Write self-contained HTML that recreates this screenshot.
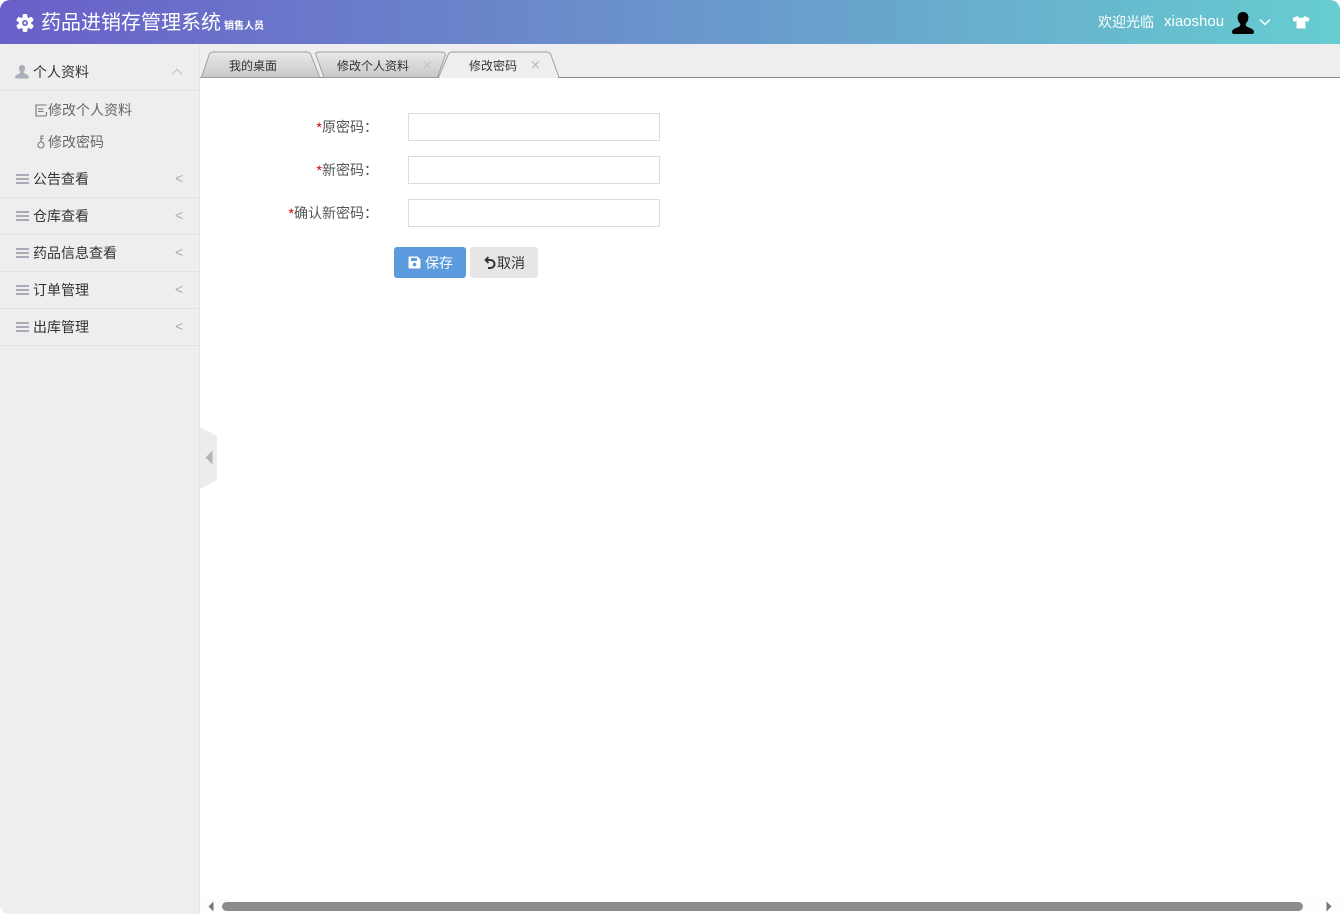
<!DOCTYPE html>
<html lang="zh-CN"><head><meta charset="utf-8"><title>药品进销存管理系统</title>
<style>
*{box-sizing:border-box;margin:0;padding:0}
html,body{width:1340px;height:914px;overflow:hidden;background:#fff}
body{font-family:"Liberation Sans","Noto Sans CJK SC",sans-serif;font-size:14px;color:#333;position:relative}
.a{position:absolute;white-space:nowrap}
#hd{left:0;top:0;width:1340px;height:44px;background:linear-gradient(90deg,#6a5fc9 0%,#6a8fcb 45%,#66cdd0 100%);border-radius:10px 10px 0 0}
#side{left:0;top:44px;width:200px;height:870px;background:#eee;border-right:1px solid #e4e4e6;border-bottom-left-radius:10px}
.ln{position:absolute;left:0;width:199px;height:1px;background:#e3e3e3}
.m{left:33px;font-size:14px;line-height:18px;color:#333}
.s{left:48px;font-size:14px;line-height:18px;color:#666}
.lt{left:175px;font-size:14px;line-height:16px;color:#aaa;font-family:"Liberation Sans",sans-serif}
.bar{left:16px;width:13px;height:10px;border-top:2px solid #aab;border-bottom:2px solid #aab}
.bar:after{content:"";position:absolute;left:0;right:0;top:2px;height:2px;background:#aab}
#tb{left:200px;top:44px;width:1140px;height:34px;background:#eeeef0;border-bottom:1px solid #8a8a8a}
.t{font-size:12px;line-height:16px;color:#333}
.x{font-size:13px;line-height:16px;color:#b5b5b5;font-family:"DejaVu Sans",sans-serif}
.lb{font-size:14px;line-height:18px;color:#555;text-align:right;width:120px;left:258px}
.lb b{color:#c00;font-weight:normal}
.in{left:408px;width:252px;height:28px;border:1px solid #ddd;background:#fff}
.btn{top:247px;height:31px;border-radius:3px;font-size:14px;line-height:31px}
</style></head><body>
<div class="a" id="hd"></div>
<svg class="a" style="left:15px;top:13px" width="20" height="20" viewBox="0 0 20 20"><g fill="#fff"><circle cx="10" cy="10" r="6.200"/><rect x="7.600" y="1" width="4.800" height="5" rx="1.500"/><rect x="7.600" y="14" width="4.800" height="5" rx="1.500"/><rect x="7.600" y="1" width="4.800" height="5" rx="1.500" transform="rotate(60 10 10)"/><rect x="7.600" y="14" width="4.800" height="5" rx="1.500" transform="rotate(60 10 10)"/><rect x="7.600" y="1" width="4.800" height="5" rx="1.500" transform="rotate(120 10 10)"/><rect x="7.600" y="14" width="4.800" height="5" rx="1.500" transform="rotate(120 10 10)"/></g><circle cx="10" cy="10" r="3" fill="#6a62c9"/><circle cx="10" cy="10" r="1.400" fill="#e8e8f8"/></svg>
<div class="a" style="left:41px;top:9px;font-size:20px;line-height:28px;color:#fff">药品进销存管理系统</div>
<div class="a" style="left:224px;top:20px;font-size:10px;line-height:14px;color:#fff;font-weight:bold">销售人员</div>
<div class="a" style="left:1098px;top:13px;font-size:14px;line-height:18px;color:#fff">欢迎光临</div>
<div class="a" style="left:1164px;top:13px;font-size:15px;line-height:18px;color:#fff">xiaoshou</div>
<svg class="a" style="left:1231px;top:11px" width="24" height="24" viewBox="0 0 24 24"><path d="M12 1c-3.800 0-5.700 2.600-5.400 6 .2 2.400 1.400 4.300 2.500 5.500.4.500.3 2-.5 2.700C7 16.600 1.500 17.500 1 20.500c-.2 1.500.8 2.500 2 2.500h18c1.200 0 2.200-1 2-2.500-.5-3-6-3.900-7.600-5.300-.8-.7-.9-2.200-.5-2.700 1.100-1.200 2.300-3.100 2.500-5.500C17.700 3.600 15.800 1 12 1z" fill="#000"/></svg>
<svg class="a" style="left:1259px;top:18px" width="12" height="8" viewBox="0 0 12 8"><path d="M1 1.500l5 5 5-5" fill="none" stroke="#fff" stroke-width="1.500"/></svg>
<svg class="a" style="left:1292px;top:15px" width="18" height="14" viewBox="0 0 18 14"><path d="M5.500 1L1 3l-.5 1 1.500 3 2.500-1v7.500h9V6l2.500 1 1.500-3-.5-1-4.500-2c-1 1.500-2 2-3.500 2S6.500 2.500 5.500 1z" fill="#fff"/></svg>

<div class="a" id="side"></div>
<svg class="a" style="left:15px;top:65px" width="14" height="14" viewBox="0 0 14 14"><path d="M7 0C5 0 3.800 1.500 4 3.500c.1 1.400.6 2.500 1.200 3.200.2.500.1 1.200-.3 1.500C3.800 9 .5 9.600.2 12c-.1.800.3 1.500 1 1.500h11.600c.7 0 1.100-.7 1-1.500-.3-2.400-3.600-3-4.700-3.800-.4-.3-.5-1-.3-1.500.6-.7 1.100-1.800 1.200-3.200C10.200 1.500 9 0 7 0z" fill="#a9afbb"/></svg>
<div class="a m" style="top:63px">个人资料</div>
<svg class="a" style="left:171px;top:68px" width="12" height="8" viewBox="0 0 12 8"><path d="M1 6.500l5-5 5 5" fill="none" stroke="#c4c4c4" stroke-width="1.200"/></svg>
<div class="ln" style="top:90px"></div>
<svg class="a" style="left:35px;top:104px" width="13" height="13" viewBox="0 0 13 13"><path d="M11.500 1H1v11h9.500l1-1V8M3 5h5.500M3 7.500h5.500" fill="none" stroke="#777" stroke-width="1.100"/></svg>
<div class="a s" style="top:101px">修改个人资料</div>
<svg class="a" style="left:36px;top:135px" width="11" height="14" viewBox="0 0 11 14"><circle cx="5" cy="10" r="3" fill="none" stroke="#777" stroke-width="1.100"/><path d="M5 7V1h3M5 3.500h2.500" fill="none" stroke="#777" stroke-width="1.100"/></svg>
<div class="a s" style="top:133px">修改密码</div>

<div class="a bar" style="top:174px"></div><div class="a m" style="top:170px">公告查看</div><div class="a lt" style="top:170px">&lt;</div><div class="ln" style="top:197px"></div>
<div class="a bar" style="top:211px"></div><div class="a m" style="top:207px">仓库查看</div><div class="a lt" style="top:207px">&lt;</div><div class="ln" style="top:234px"></div>
<div class="a bar" style="top:248px"></div><div class="a m" style="top:244px">药品信息查看</div><div class="a lt" style="top:244px">&lt;</div><div class="ln" style="top:271px"></div>
<div class="a bar" style="top:285px"></div><div class="a m" style="top:281px">订单管理</div><div class="a lt" style="top:281px">&lt;</div><div class="ln" style="top:308px"></div>
<div class="a bar" style="top:322px"></div><div class="a m" style="top:318px">出库管理</div><div class="a lt" style="top:318px">&lt;</div><div class="ln" style="top:345px"></div>

<div class="a" id="tb"></div>
<svg class="a" style="left:200px;top:44px" width="370" height="34" viewBox="0 0 370 34">
<defs><linearGradient id="g" x1="0" y1="0" x2="0" y2="1"><stop offset="0" stop-color="#e9e9e9"/><stop offset="1" stop-color="#c8c8c8"/></linearGradient></defs>
<path d="M1.500 33.500L9 11q1-3 4-3h94q3 0 4 3l9 22.500z" fill="url(#g)" stroke="#a0a0a0"/>
<path d="M115.500 9.500q1-1.500 4-1.500h122q3 0 4 2.500l-8 23H124z" fill="url(#g)" stroke="#a0a0a0"/>
<path d="M238.500 33.500L248 11q1-3 4-3h95q3 0 4 3l8 22.500" fill="#eeeef0" stroke="#a0a0a0"/>
<path d="M239 33.500h119" stroke="#eeeef0" stroke-width="1.500"/>
</svg>
<div class="a t" style="left:229px;top:58px">我的桌面</div>
<div class="a t" style="left:337px;top:58px">修改个人资料</div>
<div class="a x" style="left:422px;top:58px;color:#c4c4c4">×</div>
<div class="a t" style="left:469px;top:58px">修改密码</div>
<div class="a x" style="left:530px;top:58px">×</div>

<div class="a lb" style="top:118px"><b>*</b>原密码：</div>
<div class="a in" style="top:113px"></div>
<div class="a lb" style="top:161px"><b>*</b>新密码：</div>
<div class="a in" style="top:156px"></div>
<div class="a lb" style="top:204px"><b>*</b>确认新密码：</div>
<div class="a in" style="top:199px"></div>

<div class="a btn" style="left:394px;width:72px;background:#5b9bdd"></div>
<svg class="a" style="left:408px;top:256px" width="13" height="13" viewBox="0 0 13 13"><path d="M1.500 0.500h8l3 3v8a1 1 0 0 1-1 1h-10a1 1 0 0 1-1-1v-10a1 1 0 0 1 1-1z" fill="#fff"/><rect x="3" y="2" width="6" height="3" fill="#5b9bdd"/><circle cx="6.500" cy="8.500" r="1.800" fill="#5b9bdd"/></svg>
<div class="a" style="left:425px;top:254px;font-size:14px;line-height:18px;color:#fff">保存</div>
<div class="a btn" style="left:470px;width:68px;background:#e6e6e6"></div>
<svg class="a" style="left:484px;top:256px" width="13" height="14" viewBox="0 0 13 14"><path d="M4.500 1L1.500 4l3 3" fill="none" stroke="#333" stroke-width="1.800"/><path d="M2 4h4.500a4 4 0 0 1 4 4 4 4 0 0 1-4 4H4" fill="none" stroke="#333" stroke-width="2"/></svg>
<div class="a" style="left:497px;top:254px;font-size:14px;line-height:18px;color:#333">取消</div>

<svg class="a" style="left:200px;top:427px" width="18" height="62" viewBox="0 0 18 62"><path d="M0 0l17 9v44L0 62z" fill="#ececec"/><path d="M12.500 23.500v14l-7-7z" fill="#b5b5b5"/></svg>

<div class="a" style="left:200px;top:898px;width:1140px;height:16px;background:#fdfdfd;border-bottom-right-radius:10px"></div>
<svg class="a" style="left:206px;top:901px" width="10" height="11" viewBox="0 0 10 11"><path d="M7.500 0.500v10l-5-5z" fill="#777"/></svg>
<div class="a" style="left:222px;top:902px;width:1081px;height:9px;background:#8c8c8c;border-radius:5px"></div>
<svg class="a" style="left:1324px;top:901px" width="10" height="11" viewBox="0 0 10 11"><path d="M2.500 0.500v10l5-5z" fill="#777"/></svg>
</body></html>
